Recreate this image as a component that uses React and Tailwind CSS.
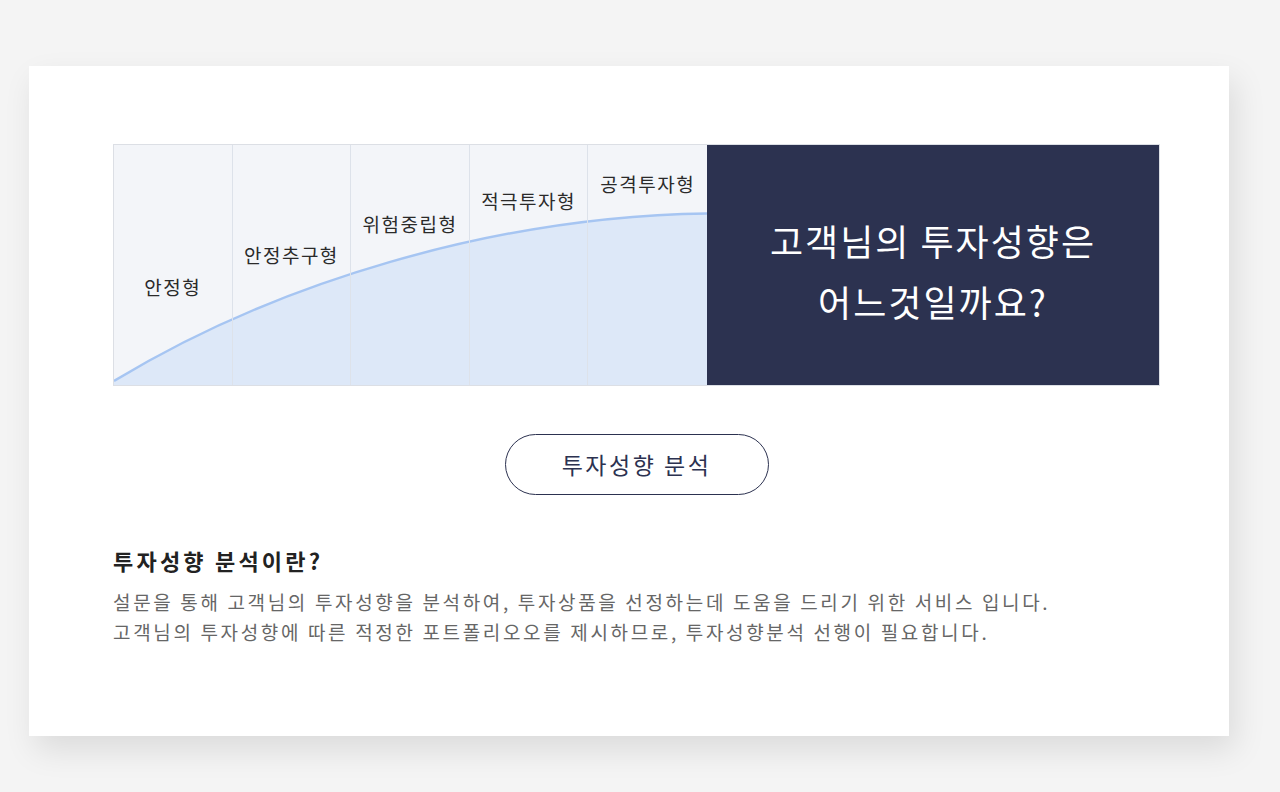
import React from 'react';

const KR = "font-['Noto_Sans_CJK_KR','Noto_Sans',sans-serif]";

const levels = [
  { name: '안정형', pad: 'pt-[131px]' },
  { name: '안정추구형', pad: 'pt-[99px]' },
  { name: '위험중립형', pad: 'pt-[68px]' },
  { name: '적극투자형', pad: 'pt-[45px]' },
  { name: '공격투자형', pad: 'pt-[28px]' },
];

function RiskCurve() {
  return (
    <svg className="absolute inset-0 h-full w-full" viewBox="0 0 594 242" preserveAspectRatio="none">
      <path d="M0 238 C 160 140, 380 72, 594 69 L594 242 L0 242 Z" fill="#dde8f8" />
      <path d="M0 238 C 160 140, 380 72, 594 69" fill="none" stroke="#a6c5f2" strokeWidth="2.5" />
    </svg>
  );
}

export default function App() {
  return (
    <div className={`min-h-screen bg-[#f4f4f4] pt-[66px] pl-[29px] ${KR}`}>
      <div className="w-[1200px] h-[670px] bg-white pl-[84px] pr-[69px] pt-[78px] shadow-[6px_14px_30px_rgba(0,0,0,0.10)]">
        {/* chart + question panel */}
        <div className="flex h-[242px] border border-[#dcdfe5]">
          <div className="relative w-[593px] bg-[#f3f5f9]">
            <RiskCurve />
            <div className="relative grid h-full grid-cols-5">
              {levels.map((lv, i) => (
                <div
                  key={lv.name}
                  className={`${lv.pad} text-center text-[19px] leading-[22px] tracking-[1.5px] text-[#2a2a2a] ${i < 4 ? 'border-r border-[#dde2ea]' : ''}`}
                >
                  {lv.name}
                </div>
              ))}
            </div>
          </div>
          <div className="flex flex-1 items-center justify-center bg-[#2c3250] pt-[12px]">
            <p className="text-center text-[36px] leading-[61px] tracking-[2px] text-white">
              고객님의 투자성향은
              <br />
              어느것일까요?
            </p>
          </div>
        </div>

        {/* button */}
        <div className="mt-[48px] flex justify-center">
          <button className="h-[61px] w-[264px] rounded-full border border-[#2c3250] text-[23px] tracking-[2.5px] text-[#2c3250]">
            투자성향 분석
          </button>
        </div>

        {/* description */}
        <div className="mt-[50px]">
          <h3 className="text-[22px] font-bold leading-[30px] tracking-[3.2px] text-[#222]">투자성향 분석이란?</h3>
          <p className="mt-[12px] text-[19px] leading-[30px] tracking-[2.65px] text-[#666]">
            설문을 통해 고객님의 투자성향을 분석하여, 투자상품을 선정하는데 도움을 드리기 위한 서비스 입니다.
            <br />
            고객님의 투자성향에 따른 적정한 포트폴리오오를 제시하므로, 투자성향분석 선행이 필요합니다.
          </p>
        </div>
      </div>
    </div>
  );
}
